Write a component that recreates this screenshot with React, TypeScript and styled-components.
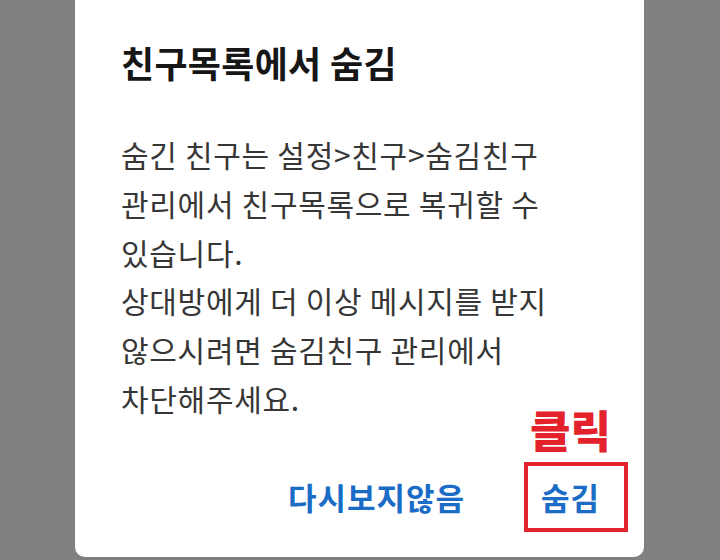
import React from 'react'
import styled, { createGlobalStyle } from 'styled-components'

const GlobalStyle = createGlobalStyle`
  html, body {
    margin: 0;
    padding: 0;
    background: #808080;
  }
  body {
    font-family: "Noto Sans CJK KR", "Noto Sans", sans-serif;
  }
`

const Screen = styled.div`
  width: 720px;
  height: 560px;
  background: #808080;
  overflow: hidden;
  display: flex;
  padding-left: 75px;
  box-sizing: border-box;
`

const Dialog = styled.section`
  width: 569px;
  height: 557px;
  background: #ffffff;
  border-radius: 0 0 10px 10px;
  box-sizing: border-box;
  padding: 40px 16px 0 46px;
  display: flex;
  flex-direction: column;
`

const Title = styled.h2`
  margin: 0;
  font-size: 36px;
  line-height: 44px;
  font-weight: 700;
  color: #161616;
  letter-spacing: 0.3px;
`

const Message = styled.p`
  margin: 46px 0 0;
  font-size: 30px;
  line-height: 48.8px;
  font-weight: 400;
  color: #363636;
  letter-spacing: 0.7px;
  white-space: nowrap;
`

const Actions = styled.div`
  margin-top: auto;
  margin-bottom: 25px;
  display: flex;
  justify-content: flex-end;
  align-items: center;
  gap: 59px;
`

const TextButton = styled.button`
  border: none;
  background: none;
  padding: 0;
  font-family: inherit;
  font-size: 31px;
  line-height: 36px;
  font-weight: 700;
  letter-spacing: 1px;
  color: #1b6cc6;
  cursor: pointer;
`

const Highlight = styled.div`
  position: relative;
  width: 104px;
  height: 70px;
  box-sizing: border-box;
  border: 4px solid #e3222b;
  display: flex;
  align-items: center;
  padding-left: 13px;
`

const Callout = styled.span`
  position: absolute;
  left: 2px;
  bottom: 100%;
  margin-bottom: 12px;
  font-size: 44px;
  line-height: 50px;
  font-weight: 900;
  color: #e3222b;
  white-space: nowrap;
`

export default function App() {
  return (
    <>
      <GlobalStyle />
      <Screen>
        <Dialog>
          <Title>친구목록에서 숨김</Title>
          <Message>
            숨긴 친구는 설정&gt;친구&gt;숨김친구
            <br />
            관리에서 친구목록으로 복귀할 수
            <br />
            있습니다.
            <br />
            상대방에게 더 이상 메시지를 받지
            <br />
            않으시려면 숨김친구 관리에서
            <br />
            차단해주세요.
          </Message>
          <Actions>
            <TextButton>다시보지않음</TextButton>
            <Highlight>
              <Callout>클릭</Callout>
              <TextButton>숨김</TextButton>
            </Highlight>
          </Actions>
        </Dialog>
      </Screen>
    </>
  )
}
